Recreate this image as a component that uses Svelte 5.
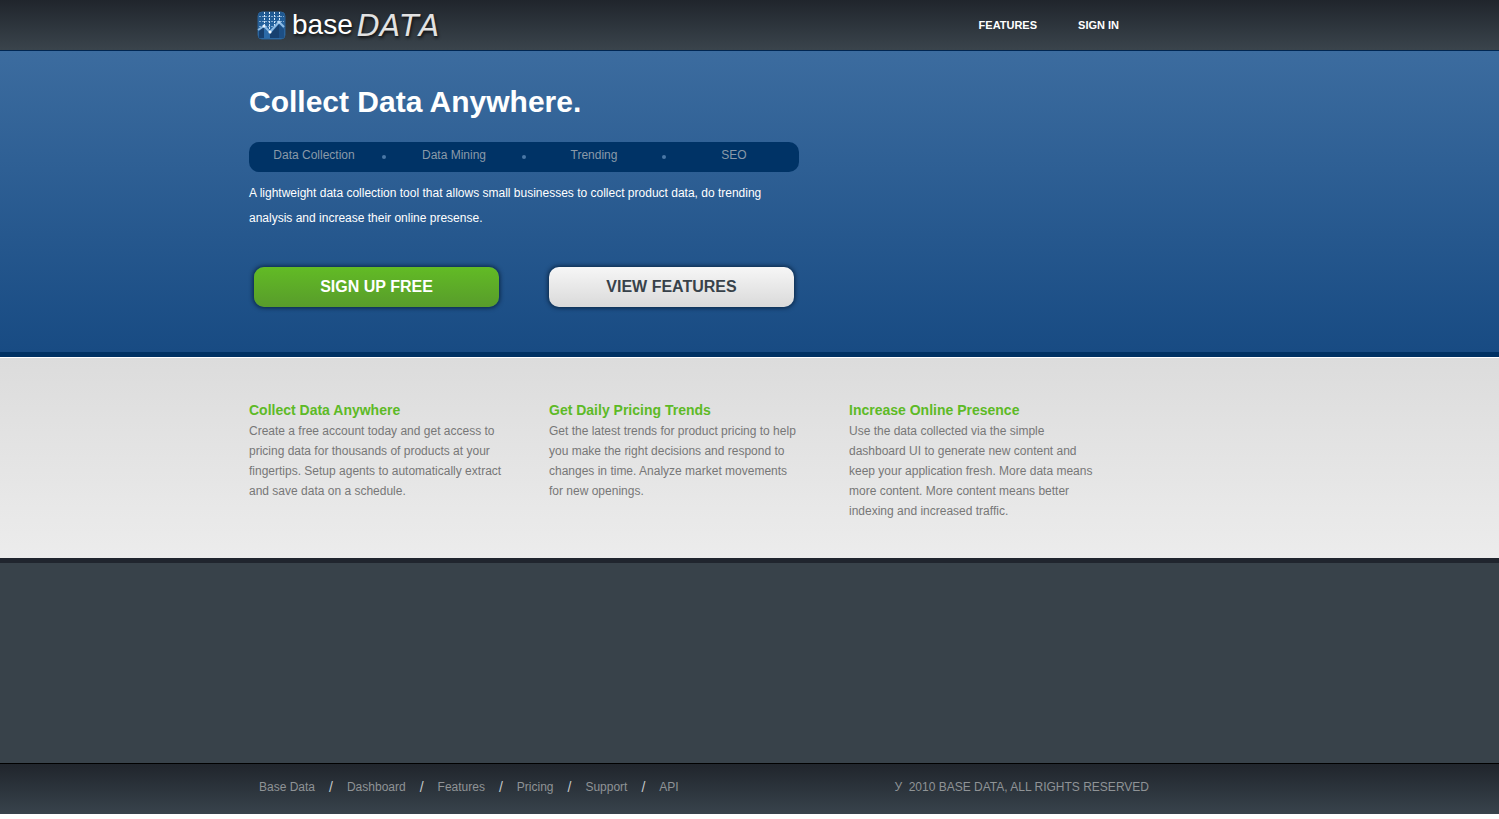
<script lang="ts">
  const topics = ['Data Collection', 'Data Mining', 'Trending', 'SEO'];
  const features = [
    {
      title: 'Collect Data Anywhere',
      text: 'Create a free account today and get access to pricing data for thousands of products at your fingertips. Setup agents to automatically extract and save data on a schedule.'
    },
    {
      title: 'Get Daily Pricing Trends',
      text: 'Get the latest trends for product pricing to help you make the right decisions and respond to changes in time. Analyze market movements for new openings.'
    },
    {
      title: 'Increase Online Presence',
      text: 'Use the data collected via the simple dashboard UI to generate new content and keep your application fresh. More data means more content. More content means better indexing and increased traffic.'
    }
  ];
  const links = ['Base Data', 'Dashboard', 'Features', 'Pricing', 'Support', 'API'];
</script>

<div class="page">
  <header class="top">
    <div class="wrap top-row">
      <a class="logo" href="#home">
        <svg width="29" height="29" viewBox="0 0 29 29" aria-hidden="true">
          <defs>
            <linearGradient id="tile" x1="0" y1="0" x2="0" y2="1">
              <stop offset="0" stop-color="#1d568f" />
              <stop offset="1" stop-color="#2f72b0" />
            </linearGradient>
          </defs>
          <rect x="1" y="1" width="27" height="27" rx="4" fill="url(#tile)" stroke="#2a5f92" />
          <path d="M7.500 1v13M12.500 1v18M17.500 1v14M22.500 1v9" stroke="#d5e8f8" stroke-dasharray="2 1" />
          <path d="M2 5.500h25M2 10.500h25M2 15.500h18" stroke="#c3dcf2" stroke-dasharray="2 1" stroke-opacity=".6" />
          <path d="M2 20 7 16l6 6 9-10 5 5v10H2z" fill="#2b6aa8" />
          <path d="M2 20 7 16v11H2zM13 23l3-3v7h-3zM16 20l6-7v14h-6z" fill="#17406f" />
          <path d="M22 13l5 5v9h-5z" fill="#1d4f85" />
          <path d="M1 19 7 15l6 6 9-10 5 5" fill="none" stroke="#8dbbe4" stroke-width="2" />
          <circle cx="7" cy="15" r="1.500" fill="#e8f4ff" />
          <circle cx="13" cy="21" r="1.500" fill="#fff" />
          <circle cx="22" cy="11" r="1.500" fill="#b9d9f4" />
        </svg>
        <span class="base">base</span><span class="data">DATA</span>
      </a>
      <nav class="menu" aria-label="Main">
        <a href="#features">FEATURES</a>
        <a href="#signin">SIGN IN</a>
      </nav>
    </div>
  </header>

  <section class="hero">
    <div class="wrap">
      <div class="pitch">
        <h1>Collect Data Anywhere.</h1>
        <ul class="topics">
          {#each topics as topic}
            <li>{topic}</li>
          {/each}
        </ul>
        <p>A lightweight data collection tool that allows small businesses to collect product data, do trending analysis and increase their online presense.</p>
        <div class="actions">
          <a class="btn green" href="#signup">SIGN UP FREE</a>
          <a class="btn light" href="#features">VIEW FEATURES</a>
        </div>
      </div>
    </div>
  </section>

  <section class="features" id="features">
    <div class="wrap columns">
      {#each features as feature}
        <article>
          <h2>{feature.title}</h2>
          <p>{feature.text}</p>
        </article>
      {/each}
    </div>
  </section>

  <div class="blank"></div>

  <footer>
    <div class="wrap foot-row">
      <ul class="links">
        {#each links as link}
          <li><a href="#top">{link}</a></li>
        {/each}
      </ul>
      <span class="copy">У&nbsp; 2010 BASE DATA, ALL RIGHTS RESERVED</span>
    </div>
  </footer>
</div>

<style>
  :global(body) {
    margin: 0;
    background: #fff;
  }
  .page {
    font-family: 'Liberation Sans', Arial, sans-serif;
    font-size: 12px;
    line-height: 20px;
    color: #777;
  }
  .wrap {
    max-width: 1001px;
    margin: 0 auto;
  }
  h1, h2, p, ul {
    margin: 0;
    padding: 0;
  }
  ul {
    list-style: none;
  }
  a {
    color: inherit;
    text-decoration: none;
  }
  .top {
    background: linear-gradient(#20252c, #3a444c);
    border-bottom: 1px solid #002652;
  }
  .top-row {
    display: flex;
    justify-content: space-between;
    height: 50px;
  }
  .logo {
    display: flex;
    align-items: center;
    padding-left: 8px;
    color: #fff;
    text-shadow: 1px 2px 3px #111;
  }
  .base {
    margin-left: 6px;
    font-size: 28px;
  }
  .data {
    margin-left: 4px;
    font: italic 30px 'DejaVu Sans', sans-serif;
    font-weight: 200;
    font-kerning: none;
    color: #e2e2e2;
  }
  .menu {
    display: flex;
    align-items: center;
    gap: 41px;
    padding-right: 131px;
    font-size: 11px;
    font-weight: bold;
    color: #fff;
  }
  .hero {
    background: linear-gradient(#3c6c9f, #184b83);
    border-bottom: 5px solid #003163;
    color: #fff;
  }
  .pitch {
    max-width: 550px;
    padding: 30px 0 45px;
  }
  h1 {
    font-size: 30px;
    line-height: 41px;
  }
  .topics {
    display: flex;
    height: 30px;
    margin: 20px 0 9px;
    border-radius: 10px;
    background: #003366;
    color: #8a9aa9;
    line-height: 26px;
  }
  .topics li {
    position: relative;
    flex: 1;
    margin-right: 10px;
    text-align: center;
  }
  .topics li:last-child {
    margin-right: 0;
  }
  .topics li:not(:last-child)::after {
    content: '';
    position: absolute;
    right: -7px;
    top: 13px;
    width: 4px;
    height: 4px;
    border-radius: 50%;
    background: #4a78a6;
  }
  .pitch p {
    line-height: 25px;
  }
  .actions {
    display: flex;
    gap: 50px;
    padding: 36px 5px 0;
  }
  .btn {
    flex: 1;
    border-radius: 10px;
    box-shadow: 0 0 4px 1px rgba(0, 20, 40, 0.7);
    font-size: 16px;
    font-weight: bold;
    line-height: 40px;
    text-align: center;
  }
  .green {
    background: linear-gradient(#62bb25, #589c2b);
    color: #fff;
  }
  .light {
    background: linear-gradient(#f6f6f6, #dadada);
    color: #38424a;
  }
  .features {
    background: linear-gradient(#dcdcdc, #ececec);
    border-top: 1px solid #fff;
    border-bottom: 5px solid #20252e;
  }
  .columns {
    display: grid;
    grid-template-columns: repeat(3, minmax(0, 254px));
    gap: 46px;
    padding: 42px 0 37px;
  }
  h2 {
    font-size: 14px;
    line-height: 21px;
    color: #5dba26;
  }
  .blank {
    height: 200px;
    background: #38424a;
  }
  footer {
    border-top: 1px solid #000;
    background: linear-gradient(#20252c, #38434c);
    color: #8f9396;
  }
  .foot-row {
    display: flex;
    justify-content: space-between;
    height: 50px;
    line-height: 46px;
  }
  .links {
    display: flex;
    padding-left: 10px;
  }
  .links li {
    display: flex;
  }
  .links li:not(:last-child)::after {
    content: '/';
    margin: 0 14px;
    font-size: 14px;
    color: #c5c8ca;
  }
  .copy {
    padding-right: 101px;
  }
</style>
